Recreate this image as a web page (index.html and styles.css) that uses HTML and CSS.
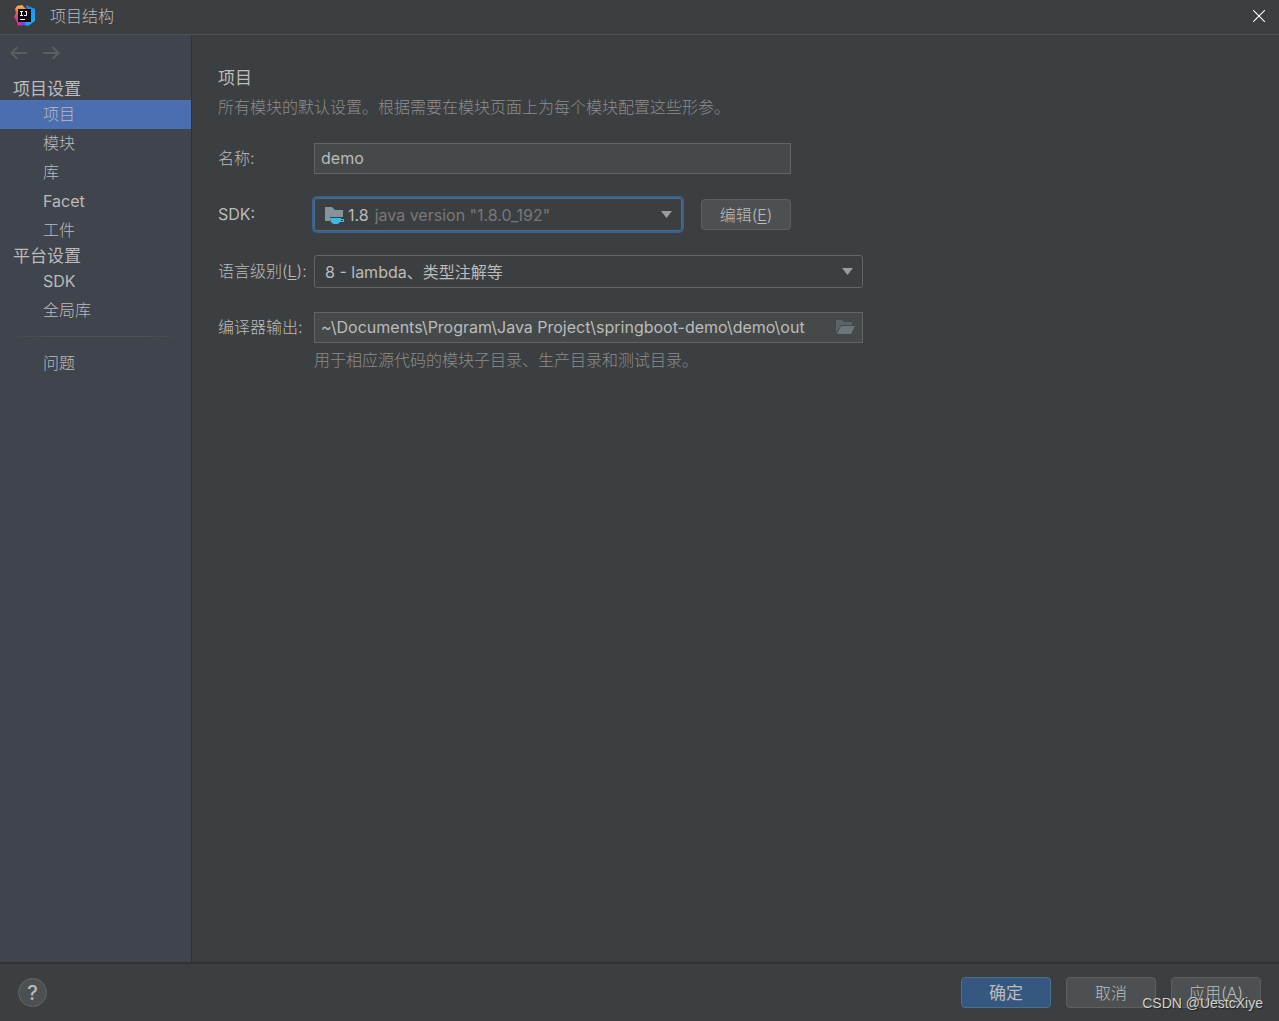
FILE: index.html
```html
<!DOCTYPE html>
<html lang="zh-CN">
<head>
<meta charset="utf-8">
<meta name="viewport" content="width=device-width, initial-scale=1">
<title>项目结构</title>
<link rel="stylesheet" href="styles.css">
</head>
<body>
<div class="dialog">
  <header class="titlebar">
    <svg class="logo" width="22" height="22" viewBox="0 0 22 22" aria-hidden="true">
      <defs>
        <linearGradient id="warm" x1="0" y1="0" x2="0" y2="1">
          <stop offset="0" stop-color="#f9c04a"/>
          <stop offset=".3" stop-color="#f5703f"/>
          <stop offset=".6" stop-color="#c43f9c"/>
          <stop offset="1" stop-color="#fe2b6c"/>
        </linearGradient>
        <linearGradient id="cool" x1="0" y1="0" x2="1" y2="1">
          <stop offset="0" stop-color="#2f6df5"/>
          <stop offset="1" stop-color="#12b6f5"/>
        </linearGradient>
      </defs>
      <path d="M3 1l5-1 4 4-3 14-5 3-1-4-3-5 2-4-1-4z" fill="url(#warm)"/>
      <path d="M12 0l9 4v12l-7 5-7-2 8-4z" fill="url(#cool)"/>
      <path d="M5 18l4-2 3 3-5 2z" fill="#8b3fd1"/>
      <path d="M4 4h13v13H4z" fill="#120a12"/>
      <path d="M6 6h3v1H8v3h1v1H6v-1h1V7H6zM11 6h2v4q0 1-1 1h-2v-1h2V7h-1zM6 14h5v1H6z" fill="#fff"/>
    </svg>
    <h1 class="title">项目结构</h1>
    <button class="close" type="button" aria-label="关闭">
      <svg width="12" height="12" viewBox="0 0 12 12"><path d="M0 0l12 12M12 0L0 12" stroke="#fff" stroke-width="1.100"/></svg>
    </button>
  </header>

  <div class="body">
    <nav class="sidebar">
      <div class="history">
        <button type="button" aria-label="后退"><svg width="17" height="14" viewBox="0 0 17 14"><path d="M7.500 1L1.500 7l6 6M1.500 7H17"/></svg></button>
        <button type="button" aria-label="前进"><svg width="17" height="14" viewBox="0 0 17 14"><path d="M9.500 1l6 6-6 6M15.500 7H0"/></svg></button>
      </div>
      <h2 class="group">项目设置</h2>
      <a class="item selected" href="#project">项目</a>
      <a class="item" href="#modules">模块</a>
      <a class="item" href="#libraries">库</a>
      <a class="item latin" href="#facets">Facet</a>
      <a class="item" href="#artifacts">工件</a>
      <h2 class="group">平台设置</h2>
      <a class="item latin" href="#sdks">SDK</a>
      <a class="item" href="#global">全局库</a>
      <hr class="rule">
      <a class="item" href="#problems">问题</a>
    </nav>

    <main class="content">
      <h2 class="heading">项目</h2>
      <p class="hint">所有模块的默认设置。根据需要在模块页面上为每个模块配置这些形参。</p>
      <form class="form" id="settings">
        <label for="name">名称:</label>
        <input class="field narrow latin" id="name" type="text" value="demo">

        <label class="latin" for="sdk">SDK:</label>
        <div class="sdk-row narrow">
          <div class="combo focused latin">
            <svg class="folder" width="20" height="18" viewBox="0 0 20 18" aria-hidden="true">
              <path d="M0 1h7l3 3h8v7H5v4H0z" fill="#87939a"/>
              <path d="M5 12h11v1h3v3h-4q-1 2-3 2H9q-4-1-4-6z" fill="#40b6e0"/>
              <path d="M16 14h2v1h-2z" fill="#3c3f41"/>
            </svg>
            <span class="version">1.8</span>
            <select class="muted" id="sdk"><option>java version "1.8.0_192"</option></select>
            <svg class="arrow" width="11" height="7" viewBox="0 0 11 7" aria-hidden="true"><path d="M0 0h11L5.500 7z"/></svg>
          </div>
          <button class="button" type="button">编辑(<u>E</u>)</button>
        </div>

        <label for="level">语言级别(<u>L</u>):</label>
        <div class="combo latin">
          <select id="level"><option>8 - lambda、类型注解等</option></select>
          <svg class="arrow" width="11" height="7" viewBox="0 0 11 7" aria-hidden="true"><path d="M0 0h11L5.500 7z"/></svg>
        </div>

        <label for="output">编译器输出:</label>
        <div class="field browse latin">
          <input id="output" type="text" value="~\Documents\Program\Java Project\springboot-demo\demo\out">
          <button type="button" aria-label="浏览">
            <svg width="20" height="14" viewBox="0 0 20 14"><path d="M0 0h6l2 2h8v3H5L0 13z" fill="#5c6468"/><path d="M5 6h14l-4 8H1z" fill="#6b767c"/></svg>
          </button>
        </div>
        <p class="hint note">用于相应源代码的模块子目录、生产目录和测试目录。</p>
      </form>
    </main>
  </div>

  <footer class="footer">
    <button class="help" type="button" aria-label="帮助">?</button>
    <button class="button primary" type="submit" form="settings">确定</button>
    <button class="button" type="button">取消</button>
    <button class="button" type="button">应用(<u>A</u>)</button>
    <span class="watermark">CSDN @UestcXiye</span>
  </footer>
</div>
</body>
</html>
```
FILE: styles.css
```css
* {
  box-sizing: border-box;
}

body {
  margin: 0;
  background: #3c3f41;
  color: #bbbbbb;
  font: 300 16px/24px Inter, "Noto Sans CJK SC", sans-serif;
  font-optical-sizing: none;
}

h1,
h2,
p {
  margin: 0;
}

button,
input,
select {
  font: inherit;
  font-optical-sizing: inherit;
  color: inherit;
}

button {
  padding: 0;
  border: 0;
  background: none;
}

svg {
  display: block;
  flex: none;
}

u {
  text-underline-offset: 2px;
}

.latin {
  font-weight: 400;
}

.dialog {
  display: flex;
  flex-direction: column;
  min-height: 100vh;
}

.titlebar {
  display: flex;
  align-items: center;
  gap: 14px;
  height: 35px;
  padding: 0 14px 2px;
  border-bottom: 1px solid #515151;
}

.title {
  flex: 1;
  font-size: 16px;
  font-weight: 300;
}

.body {
  display: flex;
  flex: 1;
}

.sidebar {
  flex: none;
  width: 192px;
  background: #40444d;
  border-right: 1px solid #323232;
}

.history {
  display: flex;
  align-items: center;
  gap: 16px;
  height: 43px;
  padding: 0 10px 7px;
}

.history path {
  fill: none;
  stroke: #5c5d5f;
  stroke-width: 2;
}

.group {
  padding-left: 13px;
  font-size: 17px;
  font-weight: 400;
  line-height: 22px;
}

.item {
  display: block;
  padding-left: 43px;
  line-height: 29px;
  color: inherit;
  text-decoration: none;
}

.selected {
  background: #4b6eaf;
}

.rule {
  height: 1px;
  margin: 11px 10px 12px;
  border: 0;
  background: linear-gradient(90deg, transparent, #515151 20%, #515151 80%, transparent);
}

.content {
  flex: 1;
  padding: 31px 26px;
}

.heading {
  font-size: 17px;
  font-weight: 400;
}

.hint {
  padding-top: 5px;
  color: #8c8c8c;
}

.form {
  display: grid;
  grid-template-columns: 96px minmax(0, 1fr);
  align-items: center;
  row-gap: 24px;
  max-width: 645px;
  margin-top: 24px;
}

.form label {
  padding-bottom: 2px;
}

.field {
  height: 31px;
  padding: 0 6px 2px;
  border: 1px solid #646464;
  border-radius: 0;
  background: #45494a;
}

.narrow {
  width: 100%;
  max-width: 477px;
}

.sdk-row {
  display: flex;
  align-items: center;
  gap: 19px;
}

.combo {
  display: flex;
  flex: 1;
  align-items: center;
  height: 33px;
  padding: 0 9px 0 10px;
  border: 1px solid #646464;
  border-radius: 3px;
}

.focused {
  border-color: #466d94;
  box-shadow: 0 0 0 2px #3d6185;
}

.combo select,
.browse input {
  flex: 1;
  min-width: 0;
  padding: 0;
  border: 0;
  outline: 0;
  appearance: none;
  background: none;
}

.version {
  padding: 0 6px 0 3px;
}

.combo .muted {
  color: #787878;
}

.arrow {
  fill: #9a9da0;
}

.browse {
  display: flex;
  align-items: center;
}

.note {
  grid-column: 2;
  margin-top: -24px;
}

.button {
  width: 90px;
  height: 31px;
  border: 1px solid #5e6060;
  border-radius: 4px;
  background: #4c5052;
}

.primary {
  border-color: #4c708c;
  background: #365880;
  font-size: 17px;
  font-weight: 400;
}

.footer {
  position: relative;
  display: flex;
  align-items: center;
  gap: 15px;
  height: 59px;
  padding: 0 18px;
  border-top: 2px solid #323232;
}

.help {
  width: 29px;
  height: 29px;
  margin-right: auto;
  border: 1px solid #646666;
  border-radius: 50%;
  background: #4c5052;
  font-size: 20px;
  font-weight: 500;
}

.watermark {
  position: absolute;
  right: 16px;
  bottom: 6px;
  color: #d0d0d0;
  font: 400 14px/24px "Liberation Sans", sans-serif;
  text-shadow: 1px 1px 1px #222222;
}
```
